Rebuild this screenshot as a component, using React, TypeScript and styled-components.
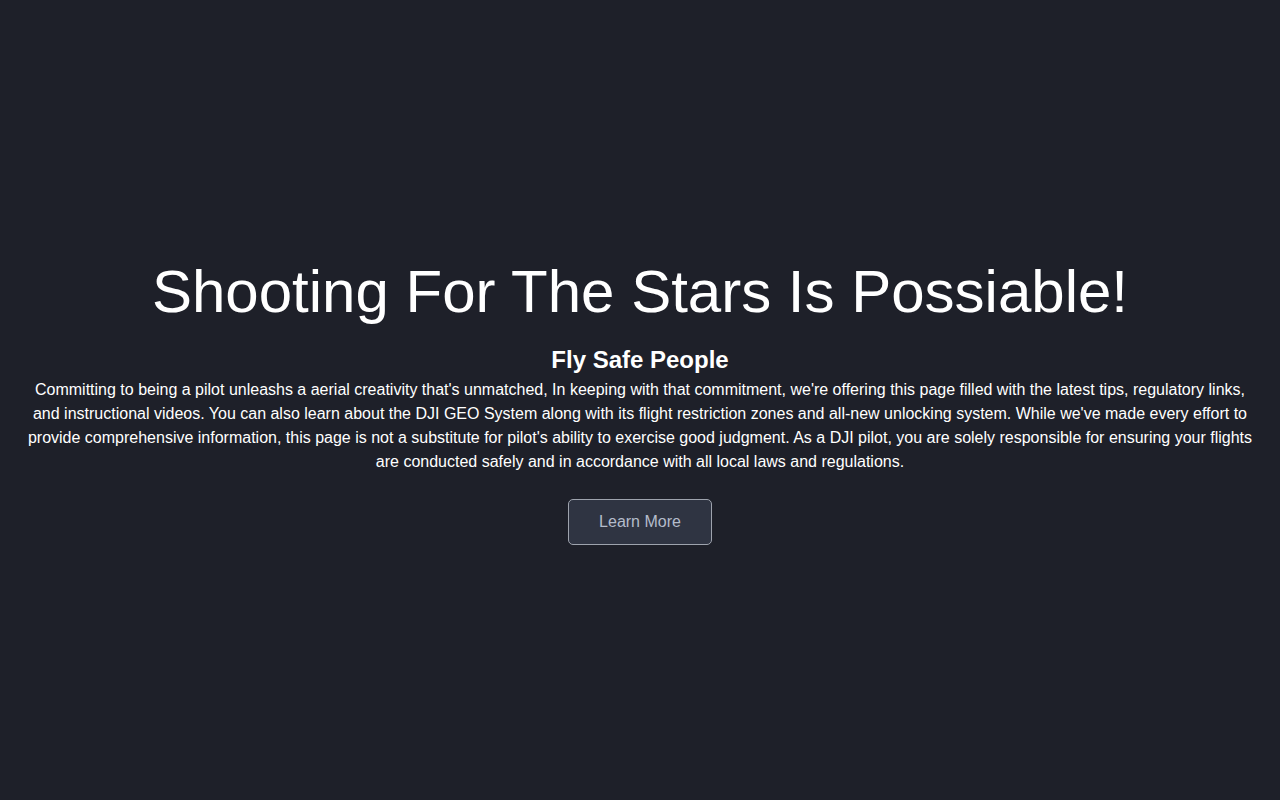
import styled, { createGlobalStyle } from "styled-components";

const GlobalStyle = createGlobalStyle`
    html, body {
        margin: 0;
        padding: 0;
        background-color: #1e2029;
    }
    body {
        font-family: "Liberation Sans", Arial, sans-serif;
    }
`;

const Hero = styled.section`
    min-height: 100vh;
    display: flex;
    flex-direction: column;
    align-items: center;
    justify-content: center;
    padding: 0 24px;
    box-sizing: border-box;
    text-align: center;
    color: #fff;
`;

const Title = styled.h1`
    font-size: 60px;
    font-weight: normal;
    line-height: 74px;
    margin: 0 0 17px 0;
`;

const Subtitle = styled.h2`
    font-size: 24px;
    font-weight: bold;
    line-height: 28px;
    margin: 0 0 4px 0;
`;

const Blurb = styled.p`
    font-size: 16px;
    line-height: 24px;
    margin: 0;
`;

const LearnButton = styled.button`
    margin-top: 25px;
    width: 144px;
    height: 46px;
    background-color: #2f3442;
    border: 1px solid #9ea3ad;
    border-radius: 5px;
    color: #b4bccb;
    font-family: inherit;
    font-size: 16px;
    cursor: pointer;
    &:hover {
        background-color: #3a4050;
    }
`;

export default function App() {
    return (
        <>
            <GlobalStyle />
            <Hero>
                <Title>Shooting For The Stars Is Possiable!</Title>
                <Subtitle>Fly Safe People</Subtitle>
                <Blurb>
                    Committing to being a pilot unleashs a aerial creativity that's unmatched, In keeping with that
                    commitment, we're offering this page filled with the latest tips, regulatory links, and
                    instructional videos. You can also learn about the DJI GEO System along with its flight
                    restriction zones and all-new unlocking system. While we've made every effort to provide
                    comprehensive information, this page is not a substitute for pilot's ability to exercise good
                    judgment. As a DJI pilot, you are solely responsible for ensuring your flights are conducted
                    safely and in accordance with all local laws and regulations.
                </Blurb>
                <LearnButton>Learn More</LearnButton>
            </Hero>
        </>
    );
}
